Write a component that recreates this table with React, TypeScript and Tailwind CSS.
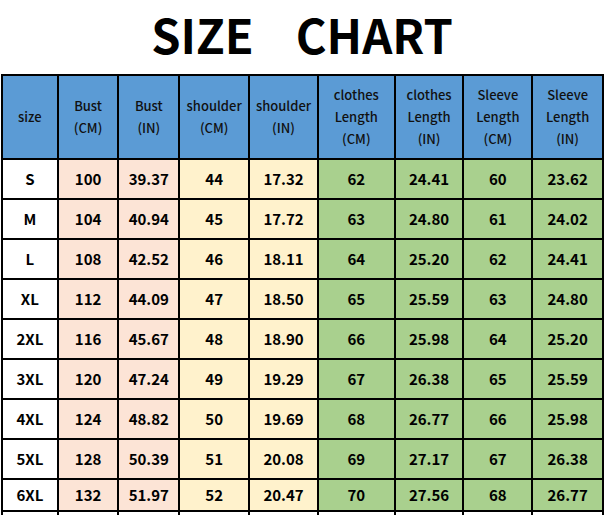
const cols = [56, 61, 61, 70, 69, 77, 69, 69, 71];

const headers: string[][] = [
  ["size"],
  ["Bust", "(CM)"],
  ["Bust", "(IN)"],
  ["shoulder", "(CM)"],
  ["shoulder", "(IN)"],
  ["clothes", "Length", "(CM)"],
  ["clothes", "Length", "(IN)"],
  ["Sleeve", "Length", "(CM)"],
  ["Sleeve", "Length", "(IN)"],
];

const rows: string[][] = [
  ["S", "100", "39.37", "44", "17.32", "62", "24.41", "60", "23.62"],
  ["M", "104", "40.94", "45", "17.72", "63", "24.80", "61", "24.02"],
  ["L", "108", "42.52", "46", "18.11", "64", "25.20", "62", "24.41"],
  ["XL", "112", "44.09", "47", "18.50", "65", "25.59", "63", "24.80"],
  ["2XL", "116", "45.67", "48", "18.90", "66", "25.98", "64", "25.20"],
  ["3XL", "120", "47.24", "49", "19.29", "67", "26.38", "65", "25.59"],
  ["4XL", "124", "48.82", "50", "19.69", "68", "26.77", "66", "25.98"],
  ["5XL", "128", "50.39", "51", "20.08", "69", "27.17", "67", "26.38"],
  ["6XL", "132", "51.97", "52", "20.47", "70", "27.56", "68", "26.77"],
];

// column fill: size / bust / shoulder / lengths
const fills = [
  "bg-white",
  "bg-[#fce4d6]",
  "bg-[#fce4d6]",
  "bg-[#fff2cc]",
  "bg-[#fff2cc]",
  "bg-[#a9d08e]",
  "bg-[#a9d08e]",
  "bg-[#a9d08e]",
  "bg-[#a9d08e]",
];

export default function App() {
  return (
    <div className="w-[604px] h-[515px] overflow-hidden bg-white font-['Noto_Sans_CJK_SC','Noto_Sans',sans-serif] text-black">
      {/* Title */}
      <div className="h-[68px] mb-[6px] flex items-center justify-center gap-[42px] text-[47px] font-bold leading-[68px]">
        <span>SIZE</span>
        <span>CHART</span>
      </div>

      {/* Table */}
      <table className="ml-[1px] table-fixed border-collapse">
        <colgroup>
          {cols.map((w, i) => (
            <col key={i} style={{ width: w }} />
          ))}
        </colgroup>
        <thead>
          <tr className="h-[84px]">
            {headers.map((h, i) => (
              <th
                key={i}
                className="border-2 border-black bg-[#5b9bd5] p-0 text-center align-middle text-[13px] font-medium leading-[22px] text-[#111]"
              >
                {h.map((line, j) => (
                  <div key={j}>{line}</div>
                ))}
              </th>
            ))}
          </tr>
        </thead>
        <tbody>
          {rows.map((r, ri) => (
            <tr key={ri} className={ri === rows.length - 1 ? "h-[32px]" : "h-[40px]"}>
              {r.map((v, ci) => (
                <td
                  key={ci}
                  className={`border-2 border-black p-0 text-center align-middle text-[15px] font-semibold leading-[20px] ${fills[ci]}`}
                >
                  {v}
                </td>
              ))}
            </tr>
          ))}
          <tr className="h-[20px]">
            {cols.map((_, ci) => (
              <td key={ci} className="border-2 border-black bg-white p-0" />
            ))}
          </tr>
        </tbody>
      </table>
    </div>
  );
}
